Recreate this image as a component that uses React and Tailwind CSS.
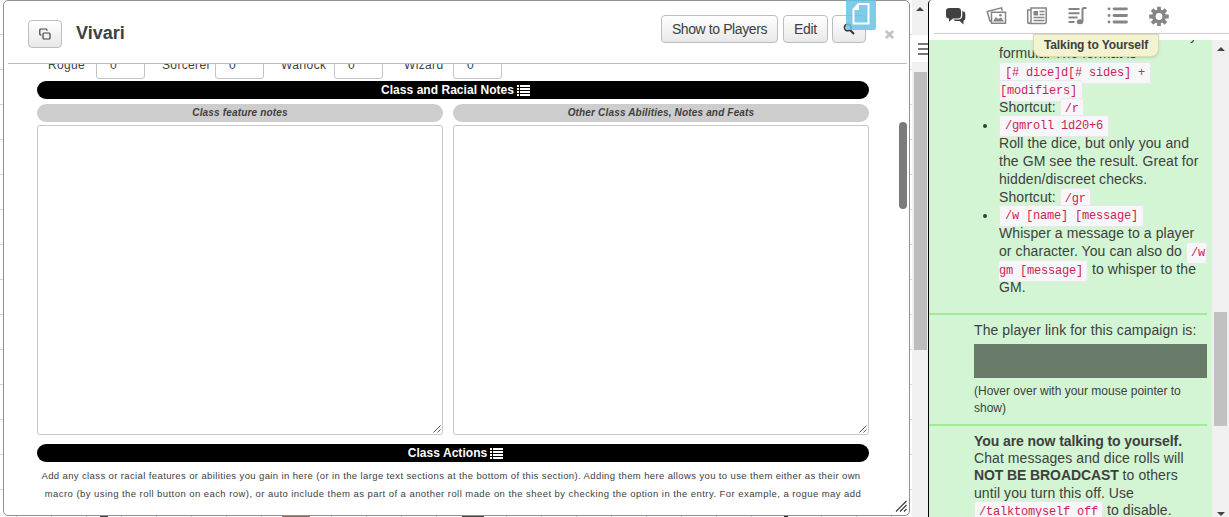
import React from "react";

const NAV = "h-5 w-[22px] shrink-0";

function ListIcon() {
  return (
    <svg viewBox="0 0 13 11" className="h-[11px] w-[13px]" fill="#fff">
      <path d="M0 0h2v2H0zM3 0h10v2H3zM0 3h2v2H0zM3 3h10v2H3zM0 6h2v2H0zM3 6h10v2H3zM0 9h2v2H0zM3 9h10v2H3z" />
    </svg>
  );
}

function BlackBar({ title, className }) {
  return (
    <div className={"flex h-[18px] items-center justify-center gap-[3px] rounded-full bg-black pl-[5px] text-[12px] font-bold leading-[18px] text-white " + className}>
      <span className="whitespace-nowrap tracking-[0.04px]">{title}</span>
      <ListIcon />
    </div>
  );
}

function LevelField({ label, className }) {
  return (
    <div className={"flex h-[15px] shrink-0 items-end justify-between overflow-hidden " + className}>
      <span className="-mt-[6px] self-start text-[12px] leading-[14px] tracking-[0.35px]">{label}</span>
      <div className="-mt-4 h-[30px] w-[49px] rounded-[3px] border border-[#c4c4c4] bg-white pl-[13px] pt-[8px] text-[12px] leading-[14px]">0</div>
    </div>
  );
}

function Notes({ title, className }) {
  return (
    <div className={"flex shrink-0 flex-col gap-[3px] " + className}>
      <div className="flex h-[18px] items-center justify-center rounded-full bg-[#cdcdcd] text-[10px] font-bold italic leading-[18px] tracking-[0.17px]">
        <span className="whitespace-nowrap">{title}</span>
      </div>
      <div className="flex h-[310px] items-end justify-end rounded-[3px] border border-[#c8c8c8] bg-white p-px">
        <svg viewBox="0 0 8 8" className="h-2 w-2" stroke="#555" strokeWidth="1">
          <path d="M0.5 7.5l7-7M4.5 7.5l3-3" />
        </svg>
      </div>
    </div>
  );
}

function Button({ children, className }) {
  return (
    <div className={"flex h-7 shrink-0 items-center justify-center rounded-[4px] border border-[#bdbdbd] bg-linear-to-b from-white to-[#e8e8e8] text-[14px] " + className}>
      {children}
    </div>
  );
}

function Line({ children, className = "" }) {
  return (
    <div className="h-[18px] whitespace-nowrap leading-[18px] tracking-[0.08px]">
      <span className={className}>{children}</span>
    </div>
  );
}

function StatusLine({ children, className = "" }) {
  return (
    <div className="h-[17.2px] whitespace-nowrap leading-[17.2px] tracking-[0.08px]">
      <span className={className}>{children}</span>
    </div>
  );
}

function BulletLine({ children }) {
  return (
    <div className="-ml-[16px] flex h-[18px] items-center whitespace-nowrap leading-[18px]">
      <span className="mr-[12px] mt-[2px] h-1 w-1 shrink-0 rounded-full bg-[#304030]" />
      <span>{children}</span>
    </div>
  );
}

function Code({ children, className = "px-[5px]" }) {
  return (
    <code className={"rounded-[3px] border border-[#e6e8ea] bg-[#f7f7f9] py-[3px] font-['Liberation_Mono',monospace] text-[12px] tracking-[-0.2px] text-[#cc2255] " + className}>
      {children}
    </code>
  );
}

function Dialog() {
  return (
    <div className="relative ml-[3px] flex h-[516px] w-[907px] shrink-0 flex-col rounded-[5px] border border-[#8f8f8f] bg-white">
      <div className="ml-1 mr-[2px] flex h-[63px] shrink-0 border-b border-[#bcbcbc]">
        <Button className="ml-5 mt-[19px] w-[34px]">
          <svg viewBox="0 0 12 12" className="h-3 w-3" fill="none" stroke="#404040" strokeWidth="1.2">
            <path d="M2.5 7H1.8A1 1 0 0 1 .8 6V2a1 1 0 0 1 1-1H7a1 1 0 0 1 1 1v.8" />
            <rect x="4" y="5" width="7" height="6" rx="1" />
          </svg>
        </Button>
        <h1 className="ml-[14px] mt-[20px] w-[60px] text-[18px] font-bold leading-[24px]">Vivari</h1>
        <div className="ml-auto mr-[13px] mt-[14px] flex">
          <Button className="w-[117px]"><span className="whitespace-nowrap tracking-[-0.4px]">Show to Players</span></Button>
          <Button className="ml-[5px] w-[45px]"><span className="tracking-[-0.3px]">Edit</span></Button>
          <Button className="ml-1 w-[34px]">
            <svg viewBox="0 0 12 12" className="h-3 w-3" fill="none" stroke="#333">
              <circle cx="4.8" cy="4.5" r="3.3" strokeWidth="1.6" />
              <path d="M7 7l4 4" strokeWidth="2" />
            </svg>
          </Button>
          <svg viewBox="0 0 10 10" className="ml-[19px] mt-[15px] h-[9px] w-[9px]" stroke="#c4c4c4" strokeWidth="3">
            <path d="M1 1l8 8M9 1l-8 8" />
          </svg>
        </div>
      </div>
      <div className="absolute left-[842px] top-[-1px] flex h-[30px] w-[30px] justify-center rounded-b-[2px] bg-[#67c3e6]/85 pt-[3px]">
        <svg viewBox="0 0 18 22" className="h-[22px] w-[18px]" fill="none" stroke="#fff" strokeWidth="2">
          <path d="M6.5 1H16.5V20.5H1.5V6.5z" />
          <path d="M1 7h6V1z" fill="#fff" stroke="none" />
        </svg>
      </div>
      <div className="flex h-[451px] overflow-hidden">
        <div className="ml-[33px] w-[832px] shrink-0">
          <div className="flex h-[15px] overflow-hidden pl-[11px]">
            <LevelField label="Rogue" className="w-[97px]" />
            <LevelField label="Sorcerer" className="ml-[17px] w-[102px]" />
            <LevelField label="Warlock" className="ml-[17px] w-[102px]" />
            <LevelField label="Wizard" className="ml-[21px] w-[98px]" />
          </div>
          <BlackBar title="Class and Racial Notes" className="mt-[2px]" />
          <div className="mt-[5px] flex gap-[10px]">
            <Notes title="Class feature notes" className="w-[406px]" />
            <Notes title="Other Class Abilities, Notes and Feats" className="w-[416px]" />
          </div>
          <BlackBar title="Class Actions" className="mt-[9px]" />
          <div className="mt-[5px] text-center text-[9.5px] leading-[18px]">
            <p className="-mr-1 whitespace-nowrap pr-[8px] tracking-[0.38px]">Add any class or racial features or abilities you gain in here (or in the large text sections at the bottom of this section). Adding them here allows you to use them either as their own</p>
            <p className="whitespace-nowrap tracking-[0.44px]">macro (by using the roll button on each row), or auto include them as part of a another roll made on the sheet by checking the option in the entry. For example, a rogue may add</p>
          </div>
        </div>
        <div className="ml-[30px] mt-[58px] h-[87px] w-2 rounded-full bg-[#7b7b7b]" />
      </div>
      <svg viewBox="0 0 12 12" className="absolute bottom-[3px] right-[2px] h-3 w-3" stroke="#333" strokeWidth="1.1">
        <path d="M1 11.5L11.5 1M5 11.5L11.5 5M9 11.5l2.5-2.5" />
      </svg>
    </div>
  );
}

function Toolbar() {
  return (
    <div className="ml-[5px] flex h-[34px] shrink-0 items-start gap-[18.6px] border-b border-[#ccc] pl-[11px] pt-[6px]">
      <svg viewBox="0 0 22 20" className={NAV} fill="#404040">
        <path d="M4.500 2h8.500q3 0 3 3v4.500q0 3-3 3H8l-4 3.200v-3.200q-3 0-3-3V5q0-3 3.500-3z" />
        <path d="M17.300 5q3 .5 3 3v4q0 2.300-1.800 2.800v3.600l-3.800-3.400h-4.500l-2-1.200 1-.3h4q4 0 4.100-4z" />
      </svg>
      <svg viewBox="0 0 22 20" className={NAV} fill="none" stroke="#858585" strokeWidth="1.5">
        <path d="M6 14.500l-2 .5L1.200 5.500l14.300-3.700.8 3" />
        <path d="M5.500 6.200h14v11h-14z" />
        <path d="M7 15.500l2.800-4.500 2.200 2 3-1.500 3 4z" fill="#858585" stroke="none" />
        <circle cx="14.500" cy="9.300" r="1.300" fill="#858585" stroke="none" />
      </svg>
      <svg viewBox="0 0 22 20" className={NAV} fill="none" stroke="#858585" strokeWidth="1.5">
        <path d="M5 4H1.700v12q0 1.500 2 1.500h15q1.500 0 1.500-1.500V2H5v13q0 2-1.500 2" />
        <path d="M13.500 5.500h5M13.500 8.500h5M7.500 11.500h11M7.500 14.500h11" strokeWidth="1.300" />
        <path d="M7.500 5h4.500v4.500H7.500z" fill="#858585" stroke="none" />
      </svg>
      <svg viewBox="0 0 22 20" className={NAV} fill="none" stroke="#858585" strokeWidth="2">
        <path d="M1.500 3h11M1.500 7.200h11M1.500 11.500h9M1.500 16h6" />
        <path d="M15.500 15.500V3.500q0-1.500 1.500-1.500h2.500" />
        <ellipse cx="13" cy="15.700" rx="3.300" ry="2.500" fill="#858585" stroke="none" />
      </svg>
      <svg viewBox="0 0 22 20" className={NAV} stroke="#858585" strokeWidth="2.800" strokeLinecap="round">
        <path d="M7 2.800h12.500M7 9.500h12.500M7 16h12.500M2 2.800h.1M2 9.500h.1M2 16h.1" />
      </svg>
      <svg viewBox="0 0 22 20" className={NAV} fill="none" stroke="#858585">
        <circle cx="11" cy="10.500" r="5.200" strokeWidth="3.600" />
        <path d="M11 .8v3.500M11 16.700v3.300M1.200 10.500h3.500M17.300 10.500h3.500M4.100 3.600l2.500 2.500M15.400 14.900l2.500 2.500M4.100 17.400l2.500-2.500M15.400 6.100l2.500-2.500" strokeWidth="3.800" />
      </svg>
    </div>
  );
}

function Chat() {
  return (
    <div className="mt-[6px] flex h-[477px] overflow-hidden">
      <div className="h-full w-[283px] shrink-0 overflow-hidden bg-[#d3f5d3]">
        <div className="-mt-[14px] h-[289px] w-[278px] border-b-2 border-[#a3ea97] pl-[70px]">
          <div className="h-[18px] pr-[10px] text-right leading-[18px]">y</div>
          <Line>formula. The format is</Line>
          <Line><Code>[# dice]d[# sides] +</Code></Line>
          <Line><Code className="pr-[5px]">[modifiers]</Code></Line>
          <Line>Shortcut: <Code className="px-[4px]">/r</Code></Line>
          <BulletLine><Code>/gmroll 1d20+6</Code></BulletLine>
          <Line>Roll the dice, but only you and</Line>
          <Line>the GM see the result. Great for</Line>
          <Line>hidden/discreet checks.</Line>
          <Line>Shortcut: <Code className="px-[4px]">/gr</Code></Line>
          <BulletLine><Code>/w [name] [message]</Code></BulletLine>
          <Line>Whisper a message to a player</Line>
          <Line>or character. You can also do <Code className="pl-1 pr-px">/w</Code></Line>
          <Line><Code className="border-l-0 pr-[4px]">gm [message]</Code> to whisper to the</Line>
          <Line>GM.</Line>
        </div>
        <div className="h-[111px] w-[278px] border-b-2 border-[#a3ea97] pl-[45px] pt-[6px]">
          <Line>The player link for this campaign is:</Line>
          <div className="mb-[5px] mt-[5px] h-[34px] bg-[#687b68]" />
          <div className="text-[12px] leading-[17px]">(Hover over with your mouse pointer to<br />show)</div>
        </div>
        <div className="w-[278px] pl-[45px] pt-[7px]">
          <StatusLine className="font-bold tracking-[-0.08px]">You are now talking to yourself.</StatusLine>
          <StatusLine>Chat messages and dice rolls will</StatusLine>
          <StatusLine><b className="tracking-[-0.1px]">NOT BE BROADCAST</b> to others</StatusLine>
          <StatusLine>until you turn this off. Use</StatusLine>
          <StatusLine><Code className="px-[4px]">/talktomyself off</Code> to disable.</StatusLine>
        </div>
      </div>
      <div className="flex h-full flex-1 flex-col items-center bg-[#f0f0f0]">
        <svg viewBox="0 0 8 5" className="mt-[6px] h-[5px] w-2 shrink-0" fill="#444"><path d="M0 5l4-4 4 4z" /></svg>
        <div className="mt-[261px] h-[114px] w-[13px] shrink-0 bg-[#c1c1c1]" />
        <svg viewBox="0 0 8 5" className="mt-[86px] h-[5px] w-2 shrink-0" fill="#444"><path d="M0 0l4 4 4-4z" /></svg>
      </div>
    </div>
  );
}

function Tabletop() {
  return (
    <div className="flex h-full w-[912px] shrink-0 flex-col bg-white">
      <div className="bg-[repeating-linear-gradient(to_bottom,#ffffff_0_34px,#d4d4d4_34px_35px)]">
        <Dialog />
      </div>
      <div className="flex h-px items-stretch bg-[repeating-linear-gradient(to_right,#ffffff_0_16px,#c8c8c8_16px_17px,#ffffff_17px_35px)]">
        <div className="ml-[100px] w-2 bg-[#404048]" />
        <div className="ml-[174px] w-7 bg-[#8d6a60]" />
        <div className="ml-[152px] w-[22px] bg-[#484040]" />
        <div className="ml-[300px] w-1 bg-[#202020]" />
      </div>
    </div>
  );
}

export default function App() {
  return (
    <div className="relative flex h-[517px] w-[1229px] overflow-hidden bg-white font-['Liberation_Sans',Arial,sans-serif] text-[14px] text-[#404040]">
      <Tabletop />
      <div className="flex h-full w-4 shrink-0 flex-col items-center bg-[#f0f0f0]">
        <svg viewBox="0 0 8 5" className="mt-[6px] h-[5px] w-2 shrink-0" fill="#444"><path d="M0 5l4-4 4 4z" /></svg>
        <div className="mt-6 flex h-[27px] w-4 shrink-0 items-center justify-end bg-white">
          <svg viewBox="0 0 10 14" className="h-[14px] w-[10px]" stroke="#777" strokeWidth="2">
            <path d="M0 2h10M0 7h10M0 12h10" />
          </svg>
        </div>
        <div className="mt-[10px] h-[278px] w-[13px] shrink-0 bg-[#bdbdbd]" />
      </div>
      <div className="h-full flex-1 rounded-tl-[4px] border-l border-black bg-white">
        <Toolbar />
        <Chat />
      </div>
      <div className="absolute left-[1033px] top-[34px] h-[23px] w-[126px] rounded-b-[8px] border border-[#dedbb0] bg-[#f3f3cf] text-center text-[12px] font-bold leading-[20px] tracking-[-0.1px] shadow">Talking to Yourself</div>
    </div>
  );
}
